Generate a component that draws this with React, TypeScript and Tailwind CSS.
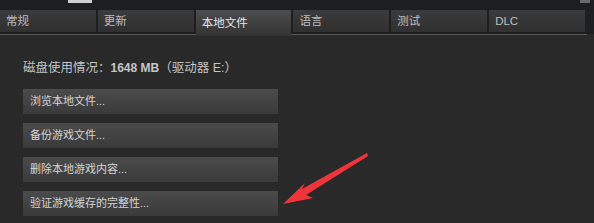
const tabs = ["常规", "更新", "本地文件", "语言", "测试", "DLC"];
const actions = [
  "浏览本地文件...",
  "备份游戏文件...",
  "删除本地游戏内容...",
  "验证游戏缓存的完整性...",
];

const font = {
  fontFamily: '"Liberation Sans", "Noto Sans CJK SC", sans-serif',
};

export default function App() {
  return (
    <div
      className="relative w-[594px] h-[223px] overflow-hidden bg-[#29292a] text-[11px]"
      style={font}
    >
      {/* title strip */}
      <div className="h-[10px] bg-[#1d1e20] relative">
        <div className="absolute left-[68px] top-0 h-[3px] w-[24px] bg-[#cfcfcf]" />
        <div className="absolute right-[4px] top-0 h-[3px] w-[10px] bg-[#6a6a6a]" />
      </div>

      {/* tabs */}
      <div className="flex h-[24px] bg-[#1d1e20] pr-[9px]">
        {tabs.map((t, i) => (
          <div
            key={t}
            className={
              "flex-1 flex items-center pl-[6px] pt-[2px] mr-[2px] last:mr-0 text-[11.5px] " +
              (i === 2
                ? "bg-gradient-to-b from-[#4d4d4d] to-[#333334] text-[#e6e6e6] h-[26px]"
                : "bg-gradient-to-b from-[#3b3b3c] to-[#303031] text-[#bdbdbd] h-[22px]")
            }
          >
            {t}
          </div>
        ))}
      </div>
      <div className="h-[1px] bg-[#59595a] mr-[7px]" />

      <div className="pl-[23px] pt-[25px] flex flex-col">
        <div className="text-[#c4c4c4] text-[12.5px] h-[16px] leading-[16px] mb-[13px]">
          磁盘使用情况：<span className="font-bold text-[12px]">1648 MB</span>（驱动器 E:）
        </div>
        <div className="flex flex-col gap-[9px] w-[255px]">
          {actions.map((a) => (
            <div
              key={a}
              className="h-[25px] flex items-center pl-[7px] text-[#d4d4d4] bg-gradient-to-b from-[#4b4b4c] to-[#3a3a3b]"
            >
              {a}
            </div>
          ))}
        </div>
      </div>

      <svg
        className="absolute left-0 top-0"
        width="594"
        height="223"
        viewBox="0 0 594 223"
      >
        <path
          d="M367 153 L302 189 L305 183 L283 204 L313 198 L306 195 L368 156 Z"
          fill="#f0353a"
        />
      </svg>
    </div>
  );
}
